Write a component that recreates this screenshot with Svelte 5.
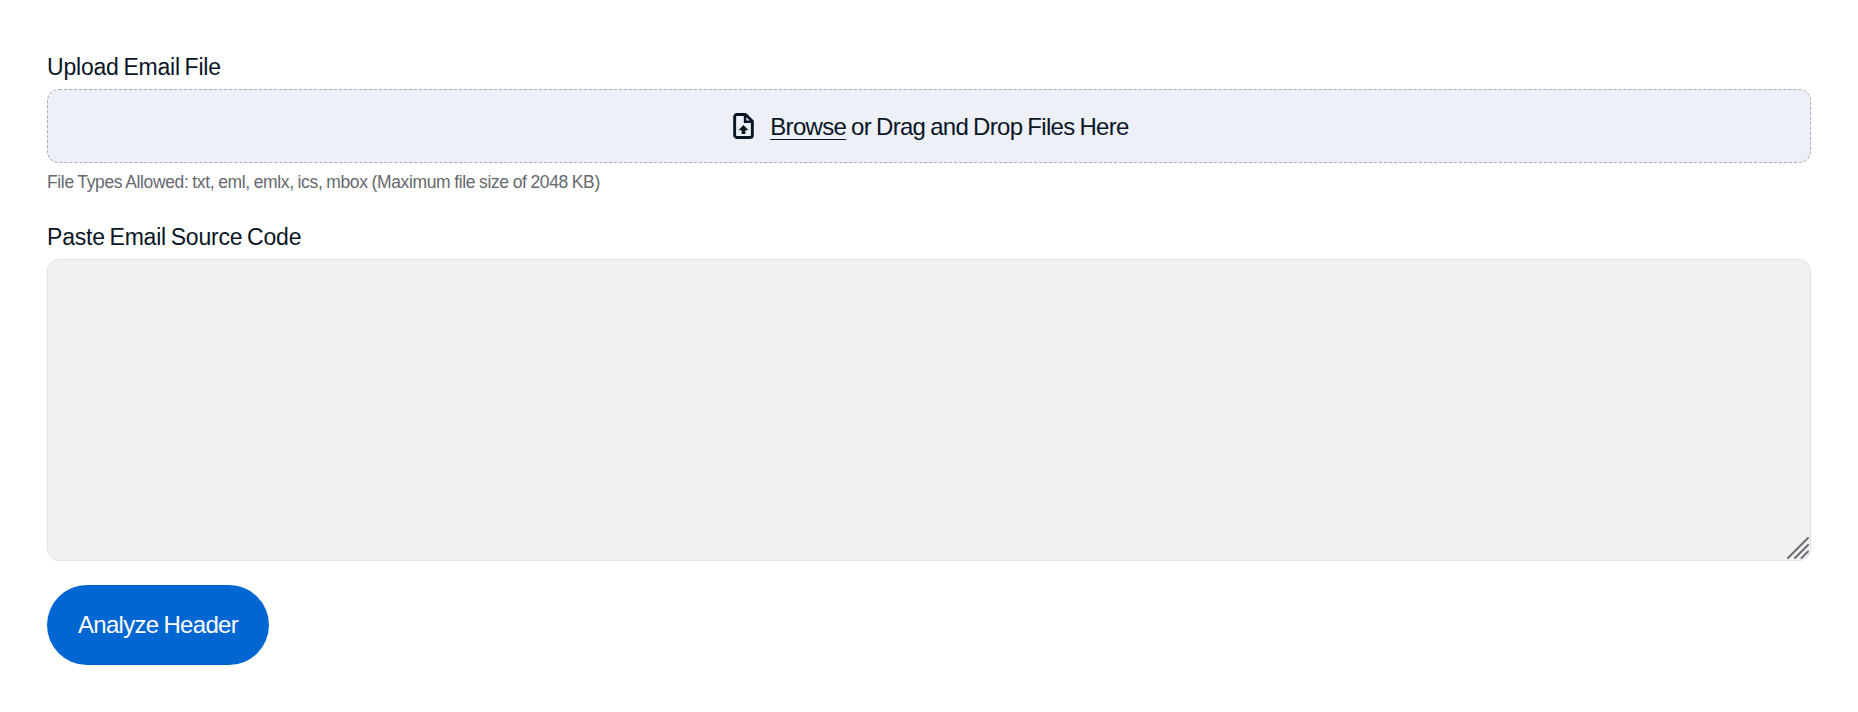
<script lang="ts">
	let source = $state('');
</script>

<form class="page" onsubmit={(e) => e.preventDefault()}>
	<div class="field upload-field">
		<label for="email-file">Upload Email File</label>
		<label class="dropzone" for="email-file">
			<svg class="file-icon" width="21" height="26" viewBox="0 0 20 25" aria-hidden="true">
				<path d="M3.5 1.5h8.5l6.5 6.5v13.5a2 2 0 0 1-2 2h-13a2 2 0 0 1-2-2v-18a2 2 0 0 1 2-2z" fill="none" stroke="#0a1626" stroke-width="2.8" stroke-linejoin="round" />
				<path d="M11.5 2v6.5h6.5" fill="none" stroke="#0a1626" stroke-width="2.4" />
				<path d="M10 11.5l4.8 5h-3v3.8h-3.6v-3.8h-3z" fill="#0a1626" />
			</svg>
			<span class="drop-text"><span class="browse">Browse</span> or Drag and Drop Files Here</span>
		</label>
		<input id="email-file" class="file-input" type="file" accept=".txt,.eml,.emlx,.ics,.mbox" />
		<p class="hint">File Types Allowed: txt, eml, emlx, ics, mbox (Maximum file size of 2048 KB)</p>
	</div>

	<div class="field source-field">
		<label for="email-source">Paste Email Source Code</label>
		<div class="textarea-wrap">
			<textarea id="email-source" bind:value={source}></textarea>
			<svg class="grip" width="22" height="22" viewBox="0 0 22 22" aria-hidden="true">
				<path d="M1 21L21 1M8 21L21 8M14.5 21L21 14.5" stroke="#6c6e72" stroke-width="2" stroke-linecap="round" />
			</svg>
		</div>
	</div>

	<button class="submit" type="submit">Analyze Header</button>
</form>

<style>
	:global(body) {
		margin: 0;
		background: #fff;
		font-family: 'Liberation Sans', Arial, sans-serif;
		color: #0a1626;
	}

	.page {
		display: flex;
		flex-direction: column;
		padding: 53px 47px 47px;
		box-sizing: border-box;
	}

	.field {
		display: flex;
		flex-direction: column;
	}

	.field > label:first-child {
		font-size: 23px;
		line-height: 28px;
		letter-spacing: -0.2px;
		word-spacing: -1.5px;
		margin-bottom: 8px;
	}

	.file-input {
		display: none;
	}

	.dropzone {
		display: flex;
		align-items: center;
		justify-content: center;
		gap: 16px;
		height: 74px;
		padding-left: 4px;
		box-sizing: border-box;
		background: #edf0f7;
		border: 1px dashed #a9adb5;
		border-radius: 12px;
		cursor: pointer;
	}

	.drop-text {
		font-size: 24px;
		line-height: 30px;
		padding-top: 2px;
		letter-spacing: -0.7px;
		word-spacing: -1px;
	}

	.browse {
		text-decoration: underline;
		text-underline-offset: 4px;
		text-decoration-thickness: 1px;
	}

	.hint {
		margin: 8px 0 0;
		font-size: 17.5px;
		line-height: 22px;
		letter-spacing: -0.36px;
		word-spacing: -0.6px;
		color: #66696e;
	}

	.source-field {
		margin-top: 30px;
	}

	.textarea-wrap {
		position: relative;
		display: flex;
	}

	textarea {
		flex: 1;
		height: 302px;
		box-sizing: border-box;
		background: #eff1f3;
		border: 1px solid #dfe1e5;
		border-radius: 12px;
		resize: none;
		outline: none;
		font: inherit;
	}

	.grip {
		position: absolute;
		right: 2px;
		bottom: 2px;
		pointer-events: none;
	}

	.submit {
		align-self: flex-start;
		margin-top: 24px;
		width: 222px;
		height: 80px;
		border: none;
		border-radius: 40px;
		background: #0066d1;
		color: #fff;
		font-family: inherit;
		font-size: 24px;
		letter-spacing: -0.7px;
		word-spacing: -1px;
		cursor: pointer;
	}
</style>
